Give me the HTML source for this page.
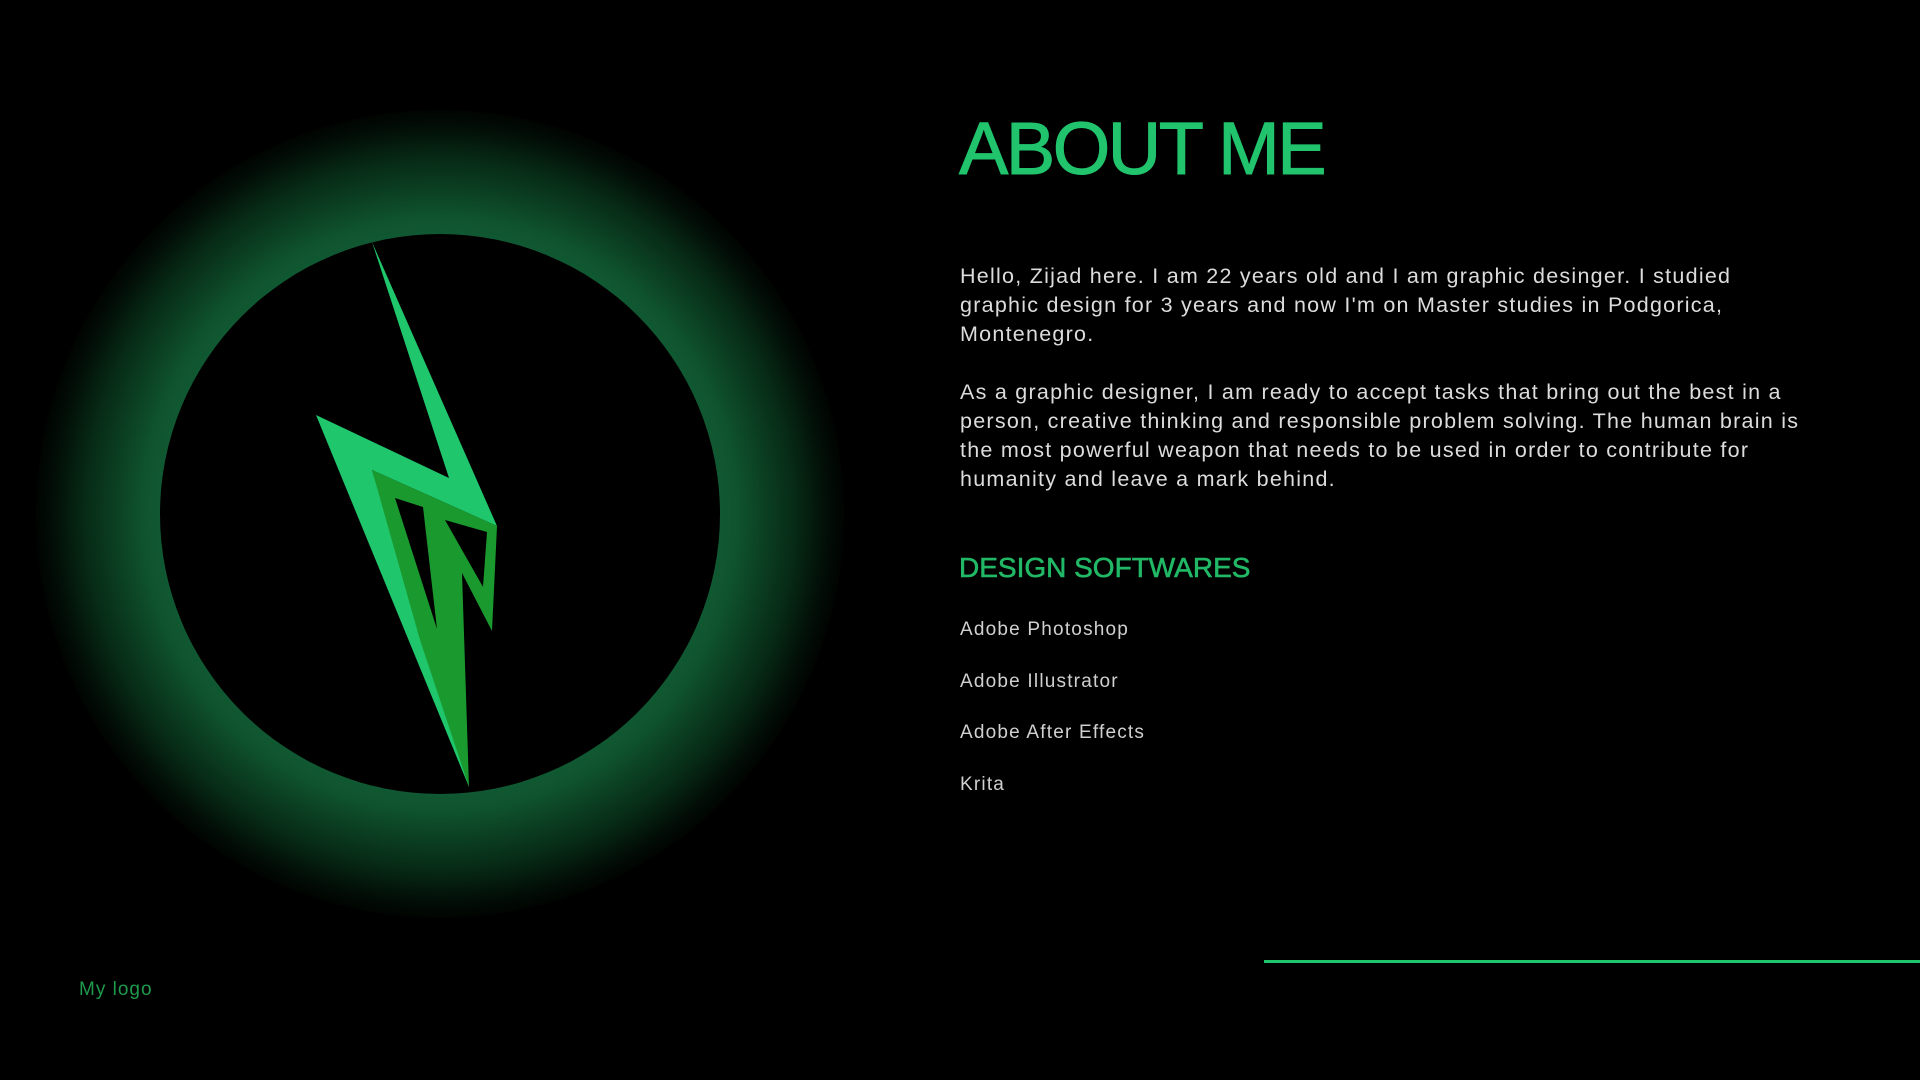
<!DOCTYPE html>
<html><head><meta charset="utf-8"><style>
html,body{margin:0;padding:0;background:#000;width:1920px;height:1080px;overflow:hidden;font-family:"Liberation Sans",sans-serif}
.a{position:absolute;white-space:nowrap}
.glow{position:absolute;left:36px;top:110px;width:808px;height:808px;border-radius:50%;background:radial-gradient(circle,#1a7a45 0%,#15693c 40%,#0f532e 52%,#072b16 62%,#020d06 68%,#000 72%)}
.disc{position:absolute;left:160px;top:234px;width:560px;height:560px;border-radius:50%;background:#000}
.t{position:absolute;left:960px;width:865px;color:#dcdcdc;font-size:21.5px;line-height:29px;font-weight:300;letter-spacing:1.25px}
.sw{color:#d0d0d0;font-size:19px;letter-spacing:1.2px}
</style></head><body>
<div class="glow"></div>
<div class="disc"></div>
<svg class="a" style="left:0;top:0" width="900" height="1000" viewBox="0 0 900 1000">
<polygon fill="#1fc66c" points="372,242 497,526 372,470 469,787 316,415 449,478"/>
<polygon fill="#1a9a2e" points="372,470 497,526 492,631 462,573 469,787 420,640"/>
<polygon fill="#000" points="395,498 423,507 437,629"/>
<polygon fill="#000" points="445,520 487,532 483,587"/>
</svg>
<div class="a" style="left:959px;top:106px;font-size:74px;color:#21c46c;letter-spacing:-2.5px;-webkit-text-stroke:1px #21c46c">ABOUT ME</div>
<div class="t" style="top:262px;width:800px">Hello, Zijad here. I am 22 years old and I am graphic desinger. I studied graphic design for 3 years and now I'm on Master studies in Podgorica, Montenegro.</div>
<div class="t" style="top:378px">As a graphic designer, I am ready to accept tasks that bring out the best in a person, creative thinking and responsible problem solving. The human brain is the most powerful weapon that needs to be used in order to contribute for humanity and leave a mark behind.</div>
<div class="a" style="left:959px;top:552px;font-size:28px;color:#21b866;-webkit-text-stroke:0.6px #21b866">DESIGN SOFTWARES</div>
<div class="a sw" style="left:960px;top:619px">Adobe Photoshop</div>
<div class="a sw" style="left:960px;top:671px">Adobe Illustrator</div>
<div class="a sw" style="left:960px;top:722px">Adobe After Effects</div>
<div class="a sw" style="left:960px;top:774px">Krita</div>
<div class="a" style="left:1264px;top:960px;width:656px;height:3px;background:#1fc66c"></div>
<div class="a" style="left:79px;top:979px;font-size:19px;color:#1f9a4c;letter-spacing:1px">My logo</div>
</body></html>
